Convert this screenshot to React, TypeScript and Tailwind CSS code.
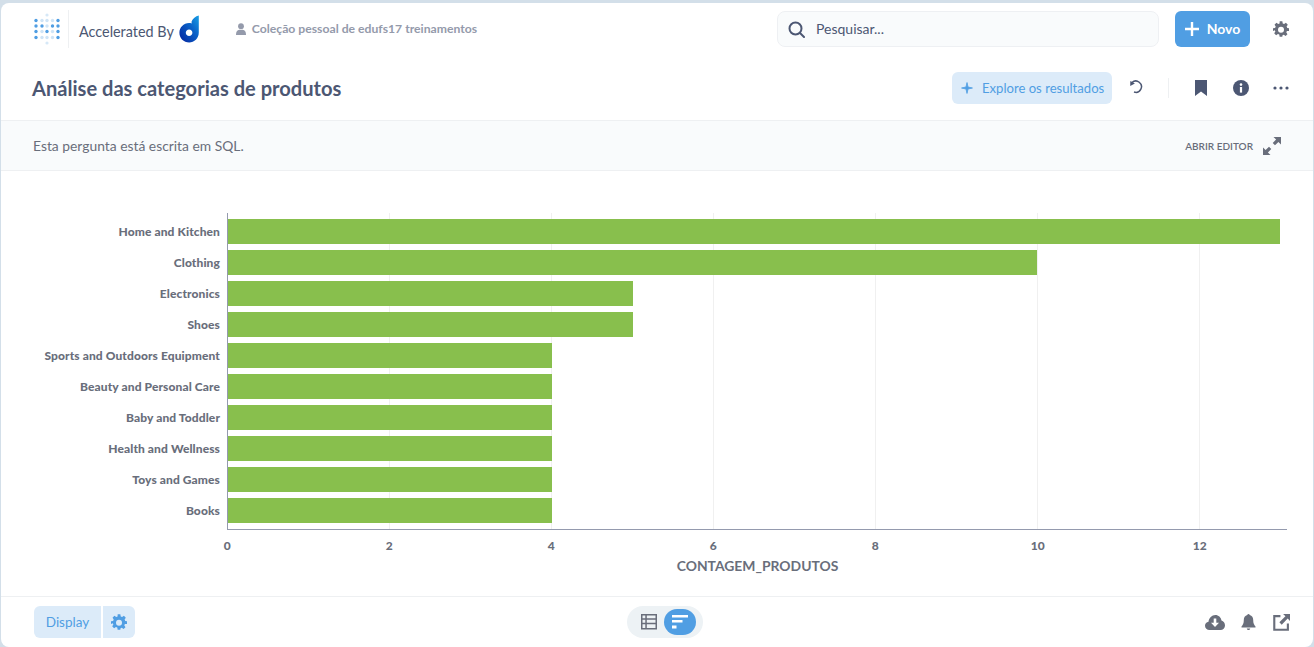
const font = { fontFamily: "Lato, 'Noto Sans', sans-serif" };

const data = [
  { label: "Home and Kitchen", value: 13 },
  { label: "Clothing", value: 10 },
  { label: "Electronics", value: 5 },
  { label: "Shoes", value: 5 },
  { label: "Sports and Outdoors Equipment", value: 4 },
  { label: "Beauty and Personal Care", value: 4 },
  { label: "Baby and Toddler", value: 4 },
  { label: "Health and Wellness", value: 4 },
  { label: "Toys and Games", value: 4 },
  { label: "Books", value: 4 },
];

const ticks = [0, 2, 4, 6, 8, 10, 12];

const logoCols = [34, 40, 45, 50.5, 56];
const logoRows = [20.5, 26, 31.5, 37.5];
const logoDark = ["x...x", "xx.xx", "x.x.x", "x...x"];

function Logo() {
  return (
    <svg width="30" height="34" viewBox="30 12 30 34" className="shrink-0">
      <circle cx="45" cy="15" r="1.6" fill="#d6e8f7" />
      <circle cx="45" cy="43" r="1.6" fill="#d6e8f7" />
      {logoRows.map((y, r) =>
        logoCols.map((x, c) => (
          <circle key={`${r}-${c}`} cx={x} cy={y} r="1.7" fill={logoDark[r][c] === "x" ? "#509ee3" : "#cfe4f6"} />
        ))
      )}
    </svg>
  );
}

function DLogo() {
  return (
    <svg width="21" height="28" viewBox="0 0 21 28" className="ml-[5px] shrink-0">
      <defs>
        <linearGradient id="dg" x1="0" y1="1" x2="1" y2="0">
          <stop offset="0" stopColor="#06229c" />
          <stop offset="0.6" stopColor="#0a63c9" />
          <stop offset="1" stopColor="#19a0e6" />
        </linearGradient>
      </defs>
      <path
        fillRule="evenodd"
        fill="url(#dg)"
        d="M19.8 0.5V17.5C19.8 23.5 15.3 27.4 10.2 27.4C4.7 27.4 0.4 23.2 0.4 17.7C0.4 12.4 4.6 8.1 10 8C11 8 11.9 8.1 12.6 8.4V6.5C13.6 3.6 16.6 1.2 19.8 0.5ZM10.1 14.4C8.2 14.4 6.8 15.9 6.8 17.7C6.8 19.6 8.2 21 10.1 21C12 21 13.4 19.6 13.4 17.7C13.4 15.9 12 14.4 10.1 14.4Z"
      />
    </svg>
  );
}

function Gear({ size, color }: { size: number; color: string }) {
  return (
    <svg width={size} height={size} viewBox="0 0 24 24" fill={color} className="shrink-0">
      <path
        fillRule="evenodd"
        d="M10 1h4l.6 3.2c.7.2 1.4.5 2 .9l2.8-1.8 2.8 2.8-1.8 2.8c.4.6.7 1.3.9 2L24 11.5v4l-3.2.1c-.2.7-.5 1.3-.9 1.9l1.8 2.7-2.8 2.8-2.8-1.8c-.6.4-1.3.7-2 .9L14 24h-4l-.1-.1-.5-3.1c-.7-.2-1.4-.5-2-.9l-2.8 1.8-2.8-2.8 1.8-2.7c-.4-.6-.7-1.2-.9-1.9L0 15.5v-4l3.2-.6c.2-.7.5-1.4.9-2L2.3 6.1l2.8-2.8 2.8 1.8c.6-.4 1.3-.7 2-.9L10 1Zm2 8a4.5 4.5 0 1 0 0 9 4.5 4.5 0 0 0 0-9Z"
        transform="translate(0 -.5)"
      />
    </svg>
  );
}

function TopBar() {
  return (
    <div className="flex h-[55px] shrink-0 items-center pb-[3px] pl-[31px] pr-[24px]">
      <Logo />
      <div className="ml-[6px] h-[38px] w-px bg-[#eef0f2]" />
      <div className="ml-[10px] flex items-center text-[14.4px] text-[#4c5773]">
        <span className="pt-[5px]">Accelerated By</span>
        <DLogo />
      </div>
      <div className="ml-[35px] flex items-center text-[12.2px] font-bold text-[#949aab]">
        <svg width="12" height="12" viewBox="0 0 12 12" fill="#949aab" className="mr-[5px]">
          <circle cx="6" cy="3.2" r="2.9" />
          <path d="M1 12c0-3.4 1-5 3.4-5.2h3.2C10 7 11 8.6 11 12Z" />
        </svg>
        Coleção pessoal de edufs17 treinamentos
      </div>
      <div className="ml-auto flex h-[36px] w-[382px] items-center rounded-lg border border-[#eef0f3] bg-[#f9fbfc] pl-[10px] text-[14px] text-[#4c5773]">
        <svg width="17" height="17" viewBox="0 0 17 17" fill="none" stroke="#4c5773" strokeWidth="2" className="mr-[11px]">
          <circle cx="7.5" cy="7.5" r="6" />
          <path d="M12 12l4 4" strokeLinecap="round" />
        </svg>
        <span className="mb-[2px]">Pesquisar...</span>
      </div>
      <div className="ml-[16px] flex h-[36px] w-[75px] items-center justify-center rounded-md bg-[#509ee3] text-[14px] font-bold text-white">
        <svg width="14" height="14" viewBox="0 0 14 14" fill="none" stroke="white" strokeWidth="2.4" className="mr-[8px]">
          <path d="M7 0v14M0 7h14" />
        </svg>
        <span className="mb-[2px]">Novo</span>
      </div>
      <div className="ml-[23px]">
        <Gear size={16} color="#696e7b" />
      </div>
    </div>
  );
}

function TitleBar() {
  return (
    <div className="flex h-[63px] shrink-0 items-center border-b border-[#eef0f2] pb-[2px] pl-[31px] pr-[24px]">
      <h1 className="text-[20.1px] font-bold leading-none text-[#4c5773]">Análise das categorias de produtos</h1>
      <div className="ml-auto flex h-[32px] w-[160px] items-center rounded-md bg-[#dcebf9] pl-[8px] text-[13.1px] text-[#509ee3]">
        <svg width="14" height="14" viewBox="0 0 14 14" fill="#509ee3" className="mr-[8px]">
          <path d="M7 1.500 8 6 12.500 7 8 8 7 12.500 6 8 1.500 7 6 6Z" stroke="#509ee3" strokeWidth="0.8" />
        </svg>
        <span className="pt-[2px]">Explore os resultados</span>
      </div>
      <svg width="15" height="15" viewBox="0 0 15 15" fill="none" className="ml-[17px] mb-[3px]">
        <path d="M3 3.600A5.600 5.600 0 1 1 5 13" stroke="#4c5773" strokeWidth="1.5" />
        <path d="M0.800 6.800 1.600 1.800 5.800 4.800Z" fill="#4c5773" transform="rotate(-8 3 4)" />
      </svg>
      <div className="ml-[24px] h-[20px] w-px bg-[#eef0f2]" />
      <svg width="12" height="16" viewBox="0 0 12 16" fill="#4c5773" className="ml-[26px]">
        <path d="M0 0h12v16L6 11.500 0 16Z" />
      </svg>
      <svg width="16" height="16" viewBox="0 0 16 16" className="ml-[26px]">
        <circle cx="8" cy="8" r="8" fill="#4c5773" />
        <rect x="6.900" y="7" width="2.200" height="5.600" fill="white" />
        <circle cx="8" cy="4.600" r="1.300" fill="white" />
      </svg>
      <svg width="16" height="4" viewBox="0 0 16 4" fill="#4c5773" className="ml-[24px]">
        <circle cx="2" cy="2" r="1.600" />
        <circle cx="8" cy="2" r="1.600" />
        <circle cx="14" cy="2" r="1.600" />
      </svg>
    </div>
  );
}

function SqlBar() {
  return (
    <div className="flex h-[50px] shrink-0 items-center border-b border-[#eef0f2] bg-[#f9fbfc] pl-[32px] pr-[32px] pt-[1px]">
      <span className="text-[13.85px] text-[#696e7b]">Esta pergunta está escrita em SQL.</span>
      <span className="ml-auto text-[10px] font-semibold text-[#696e7b]">ABRIR EDITOR</span>
      <svg width="18" height="18" viewBox="0 0 18 18" fill="#696e7b" className="ml-[10px]">
        <path d="M18 0v7.500l-2.600-2.600-3.400 3.400-2.300-2.300 3.400-3.400L10.500 0Z" />
        <path d="M0 18v-7.500l2.600 2.600 3.400-3.400 2.300 2.300-3.400 3.400 2.600 2.600Z" />
      </svg>
    </div>
  );
}

function Chart() {
  return (
    <div className="flex min-h-0 flex-1 flex-col pl-[226px] pt-[42px] text-[#696e7b]">
      <div className="relative h-[317px] w-[1060px] border-b border-l border-[#949aae]">
        {/* grid lines sit behind the bars */}
        <div className="absolute inset-0 flex">
          {ticks.map((t) => (
            <div key={t} className="h-full w-[162px] shrink-0 border-r border-[#f0f0f0]" />
          ))}
        </div>
        <div className="relative flex flex-col gap-[6px] pt-[6px]">
          {data.map((d) => (
            <div key={d.label} className="relative h-[25px]">
              <div className="h-full bg-[#88bf4d]" style={{ width: d.value * 80.9 }} />
              <div className="absolute right-full top-0 mr-[8px] flex h-full items-center whitespace-nowrap text-[12px] font-black tracking-[0.1px]">
                {d.label}
              </div>
            </div>
          ))}
        </div>
      </div>
      <div className="mt-[9px] flex h-[14px] w-[1060px] items-center text-[12px] font-black">
        {ticks.map((t) => (
          <div key={t} className="w-[162px] shrink-0">
            <span className="inline-block w-0 whitespace-nowrap">
              <span className="inline-block -translate-x-[45%]">{t}</span>
            </span>
          </div>
        ))}
      </div>
      <div className="mt-[3px] w-[1060px] pl-px text-center text-[13.9px] font-bold text-[#696e7b]">CONTAGEM_PRODUTOS</div>
    </div>
  );
}

function Footer() {
  return (
    <div className="flex h-[51px] shrink-0 items-center border-t border-[#eef0f2] pl-[33px] pr-[23px]">
      <div className="flex h-[32px] w-[67px] items-center justify-center rounded-l-md bg-[#dcebf9] text-[13.5px] text-[#509ee3]">
        Display
      </div>
      <div className="ml-[2px] flex h-[32px] w-[32px] items-center justify-center rounded-r-md bg-[#dcebf9]">
        <Gear size={16} color="#509ee3" />
      </div>
      <div className="ml-[492px] flex h-[32px] w-[76px] items-center rounded-full bg-[#edf2f5] pl-[5px]">
        <div className="flex w-[32px] justify-center">
          <svg width="16" height="16" viewBox="0 0 16 16" fill="#696e7b" className="ml-[2px]">
            <path
              fillRule="evenodd"
              d="M0 0h16v15.500H0ZM1.500 1.500v2.700h2.800V1.500ZM5.800 1.500v2.700h8.700V1.500ZM1.500 5.700v3h2.800v-3ZM5.800 5.700v3h8.700v-3ZM1.500 10.200V14h2.800v-3.800ZM5.800 10.200V14h8.700v-3.800Z"
            />
          </svg>
        </div>
        <div className="flex h-[26px] w-[32px] items-center justify-center rounded-full bg-[#509ee3]">
          <svg width="16" height="14" viewBox="0 0 16 14" fill="white">
            <path d="M0 0h16v2.500H0ZM0 5h10.500v2.500H0ZM0 10.500h4.500V13.500H0Z" />
          </svg>
        </div>
      </div>
      <svg width="20" height="15" viewBox="0 0 20 15" className="ml-auto">
        <path
          fill="#696e7b"
          d="M4.500 15C2 15 0 13.200 0 10.800 0 8.500 1.600 7 3.500 6.700 4 3 6.800 0 10.300 0c3.200 0 5.700 2.400 6.200 5.600 2 .5 3.500 2.500 3.500 4.800 0 2.600-2 4.600-4.500 4.600Z"
        />
        <path fill="white" d="M8.700 3.500h2.600v4.300H14L10 12 6 7.800h2.700Z" />
      </svg>
      <svg width="15" height="16" viewBox="0 0 15 16" fill="#696e7b" className="ml-[16px]">
        <path d="M7.500 0c.7 0 1.100.4 1.200 1 2.300.6 3.500 2.400 3.500 5 0 3.300.8 4.800 2.300 6.500V13.500H.5V12.500C2 10.800 2.800 9.300 2.800 6c0-2.600 1.200-4.400 3.500-5 .1-.6.500-1 1.200-1Z" />
        <path d="M5.800 14.500h3.400c0 .9-.7 1.500-1.700 1.500s-1.700-.6-1.700-1.500Z" />
      </svg>
      <svg width="17" height="17" viewBox="0 0 16 16" fill="none" className="ml-[17px]">
        <path d="M7 2H1.200v12.800H14V9" stroke="#696e7b" strokeWidth="2" />
        <path d="M9.500 0H16v6.500L13.800 4.300 8.200 10 6 7.800l5.700-5.600Z" fill="#696e7b" />
      </svg>
    </div>
  );
}

export default function App() {
  return (
    <div className="flex h-[647px] w-[1314px] bg-[#d3dfe9] px-px pt-[3px]" style={font}>
      <div className="flex min-w-0 flex-1 flex-col overflow-hidden rounded-lg bg-white">
        <TopBar />
        <TitleBar />
        <SqlBar />
        <Chart />
        <Footer />
      </div>
    </div>
  );
}
